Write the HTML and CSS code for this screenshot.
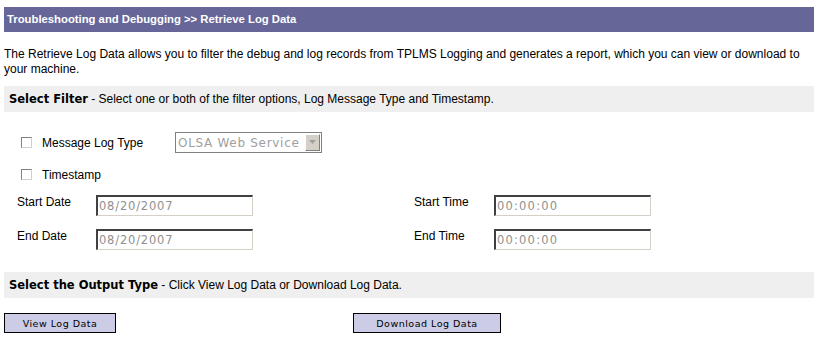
FILE: index.html
```html
<!DOCTYPE html>
<html lang="en">
<head>
    <meta charset="UTF-8">
    <title>Retrieve Log Data</title>
    <link rel="stylesheet" href="styles.css">
</head>
<body>

    <div class="page-title">Troubleshooting and Debugging &gt;&gt; Retrieve Log Data</div>

    <p class="intro">The Retrieve Log Data allows you to filter the debug and log records from TPLMS Logging and generates a report, which you can view or download to your machine.</p>

    <div class="section-bar"><b>Select Filter</b> - Select one or both of the filter options, Log Message Type and Timestamp.</div>

    <form class="filter-form">
        <div class="check-row">
            <input type="checkbox" id="msgType" class="box">
            <label for="msgType" class="check-label">Message Log Type</label>
            <span class="select-wrap">
                <select class="fake-select" disabled>
                    <option>OLSA Web Service</option>
                </select>
                <span class="select-arrow">
                    <svg width="9" height="5" viewBox="0 0 9 5"><path d="M1 0h7L4.5 4z" fill="#a0a0a0"/></svg>
                </span>
            </span>
        </div>

        <div class="check-row stamp-row">
            <input type="checkbox" id="stamp" class="box">
            <label for="stamp" class="check-label">Timestamp</label>
        </div>

        <div class="date-grid">
            <label class="field-label">Start Date</label>
            <input type="text" class="field" value="08/20/2007" disabled>
            <label class="field-label">Start Time</label>
            <input type="text" class="field time" value="00:00:00" disabled>

            <label class="field-label">End Date</label>
            <input type="text" class="field" value="08/20/2007" disabled>
            <label class="field-label">End Time</label>
            <input type="text" class="field time" value="00:00:00" disabled>
        </div>
    </form>

    <div class="section-bar output-bar"><b>Select the Output Type</b> - Click View Log Data or Download Log Data.</div>

    <div class="button-row">
        <button type="button" class="btn btn-view">View Log Data</button>
        <button type="button" class="btn btn-download">Download Log Data</button>
    </div>

</body>
</html>
```

FILE: styles.css
```css
body {
    font-family: 'Liberation Sans', Arial, sans-serif;
    font-size: 12px;
    color: #000;
    background-color: #fff;
    margin: 7px 0 0 4px;
}

.page-title {
    background-color: #666699;
    color: #fff;
    font-family: 'Liberation Sans', Arial, sans-serif;
    font-weight: bold;
    font-size: 11.3px;
    height: 25px;
    line-height: 25px;
    padding-left: 3px;
}

.intro {
    margin: 15px 0 9px 0;
    line-height: 15px;
}

.section-bar {
    background-color: #efefef;
    height: 26px;
    line-height: 26px;
    padding-left: 5px;
}

.section-bar b {
    font-family: 'DejaVu Sans', Verdana, sans-serif;
    font-size: 11.5px;
}

.filter-form {
    margin: 0;
    padding: 20px 0 0 13px;
}

.check-row {
    display: flex;
    align-items: center;
    height: 21px;
}

.stamp-row {
    margin-top: 11px;
}

.box {
    appearance: none;
    width: 11px;
    height: 11px;
    margin: 0 0 0 4px;
    border: 1px solid #808080;
    border-right-color: #d4d0c8;
    border-bottom-color: #d4d0c8;
    background-color: #fff;
}

.check-label {
    margin-left: 10px;
    width: 133px;
}

.select-wrap {
    display: inline-flex;
    align-items: center;
    height: 19px;
    width: 145px;
    border: 1px solid #808080;
    background-color: #fff;
}

.fake-select {
    appearance: none;
    border: none;
    background: transparent;
    font-family: 'DejaVu Sans', Verdana, sans-serif;
    font-size: 12px;
    letter-spacing: 0.7px;
    color: #a0a0a0;
    padding: 0 0 0 2px;
    width: 129px;
    height: 17px;
    opacity: 1;
}

.select-arrow {
    display: flex;
    align-items: center;
    justify-content: center;
    width: 13px;
    height: 15px;
    background-color: #d4d0c8;
    border: 1px solid #ffffff;
    border-right-color: #808080;
    border-bottom-color: #808080;
}

.date-grid {
    display: grid;
    grid-template-columns: 79px 318px 80px 157px;
    row-gap: 13px;
    align-items: start;
    margin-top: 10px;
}

.field-label {
    line-height: 12px;
    padding-top: 1px;
}

.field {
    box-sizing: border-box;
    width: 157px;
    height: 21px;
    padding: 0 0 0 1px;
    border: 2px solid #404040;
    border-right: 1px solid #d4d0c8;
    border-bottom: 1px solid #d4d0c8;
    background-color: #fff;
    font-family: 'DejaVu Sans', Verdana, sans-serif;
    font-size: 11.5px;
    letter-spacing: 0.8px;
    color: #909090;
    -webkit-text-fill-color: #909090;
}

.field.time {
    letter-spacing: 1.2px;
}

.output-bar {
    margin-top: 22px;
}

.button-row {
    display: flex;
    margin-top: 15px;
}

.btn {
    height: 20px;
    background-color: #cccce6;
    border: 1px solid #000;
    font-family: 'DejaVu Sans', Verdana, sans-serif;
    font-size: 9.5px;
    letter-spacing: 0.5px;
    color: #000;
    padding: 0;
}

.btn-view {
    width: 112px;
}

.btn-download {
    width: 148px;
    margin-left: 237px;
}
```
